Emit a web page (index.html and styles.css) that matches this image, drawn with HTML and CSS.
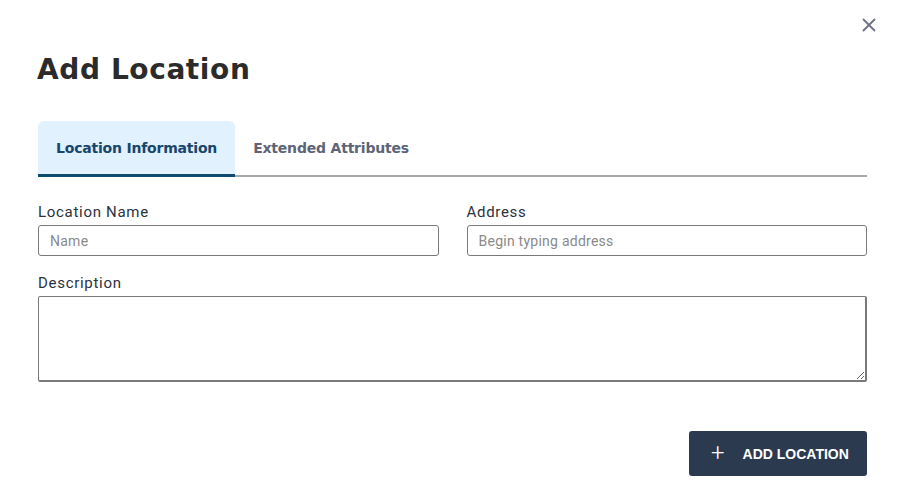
FILE: index.html
```html
<!DOCTYPE html>
<html>
<head>
<meta charset="utf-8">
<link rel="stylesheet" href="styles.css">
</head>
<body>
<div class="modal">
  <button class="close" aria-label="Close">
    <svg width="14" height="14" viewBox="0 0 14 14"><path d="M1.5 1.5 L12.5 12.5 M12.5 1.5 L1.5 12.5" stroke="#6b7180" stroke-width="1.8" stroke-linecap="round"/></svg>
  </button>
  <h1 class="title">Add Location</h1>
  <div class="tabs">
    <div class="tab active">Location Information</div>
    <div class="tab">Extended Attributes</div>
  </div>
  <div class="row">
    <div class="field">
      <label class="label">Location Name</label>
      <input class="input" placeholder="Name">
    </div>
    <div class="field">
      <label class="label">Address</label>
      <input class="input" placeholder="Begin typing address">
    </div>
  </div>
  <div class="field desc">
    <label class="label">Description</label>
    <textarea class="textarea"></textarea>
  </div>
  <div class="actions">
    <button class="btn"><span class="plus">+</span>ADD LOCATION</button>
  </div>
</div>
</body>
</html>
```
FILE: styles.css
```css
html, body { margin: 0; padding: 0; background: #fff; }
.modal {
  position: relative;
  width: 900px;
  height: 492px;
  box-sizing: border-box;
  padding: 50px 33px 0 38px;
  font-family: Roboto, "Liberation Sans", sans-serif;
}
.close {
  position: absolute;
  top: 18px;
  right: 24px;
  border: 0;
  background: none;
  padding: 0;
  width: 14px;
  height: 14px;
  cursor: pointer;
}
.close svg { display: block; }
.title {
  margin: 0 0 0 -1px;
  font-family: "DejaVu Sans", sans-serif;
  font-weight: bold;
  font-size: 28px;
  line-height: 40px;
  color: #2b2b2b;
  letter-spacing: 0.6px;
}
.tabs {
  margin-top: 31px;
  display: flex;
  border-bottom: 2px solid #a9a9a9;
}
.tab {
  height: 53px;
  padding: 0 18px;
  display: flex;
  align-items: center;
  font-family: "DejaVu Sans", sans-serif;
  font-weight: bold;
  font-size: 14px;
  color: #5d6477;
  margin-bottom: -2px;
  border-bottom: 3px solid transparent;
  letter-spacing: -0.2px;
}
.tab.active {
  background: #e1f1fd;
  border-radius: 6px 6px 0 0;
  color: #17466c;
  border-bottom-color: #0d4a70;
}
.row {
  margin-top: 26px;
  display: flex;
  gap: 28px;
}
.row .field { flex: 1; }
.field { display: flex; flex-direction: column; }
.label {
  font-size: 15px;
  line-height: 18px;
  color: #2c313d;
  margin-bottom: 4px;
  letter-spacing: 0.7px;
}
.input {
  box-sizing: border-box;
  height: 31px;
  border: 1px solid #7a7a7a;
  border-radius: 3px;
  padding: 0 11px;
  font-family: Roboto, sans-serif;
  font-size: 14px;
  letter-spacing: 0.25px;
  color: #333;
  outline: none;
}
.input::placeholder { color: #8a8a8a; }
.desc { margin-top: 18px; }
.textarea {
  box-sizing: border-box;
  height: 86px;
  border: 1px solid #7a7a7a;
  border-bottom-width: 2px;
  border-right-width: 2px;
  border-radius: 2px;
  resize: vertical;
  font-family: Roboto, sans-serif;
  outline: none;
}
.actions {
  margin-top: 49px;
  display: flex;
  justify-content: flex-end;
}
.btn {
  width: 178px;
  height: 45px;
  background: #2c3a50;
  border: 0;
  border-radius: 3px;
  color: #fff;
  font-family: "Liberation Sans", Arial, sans-serif;
  font-weight: bold;
  font-size: 14px;
  letter-spacing: 0;
  display: flex;
  align-items: center;
  padding: 0 0 0 22px;
  cursor: pointer;
}
.plus {
  font-family: Roboto, sans-serif;
  font-weight: 300;
  font-size: 24px;
  margin-right: 18px;
  line-height: 1;
  position: relative;
  top: -1px;
}
```
